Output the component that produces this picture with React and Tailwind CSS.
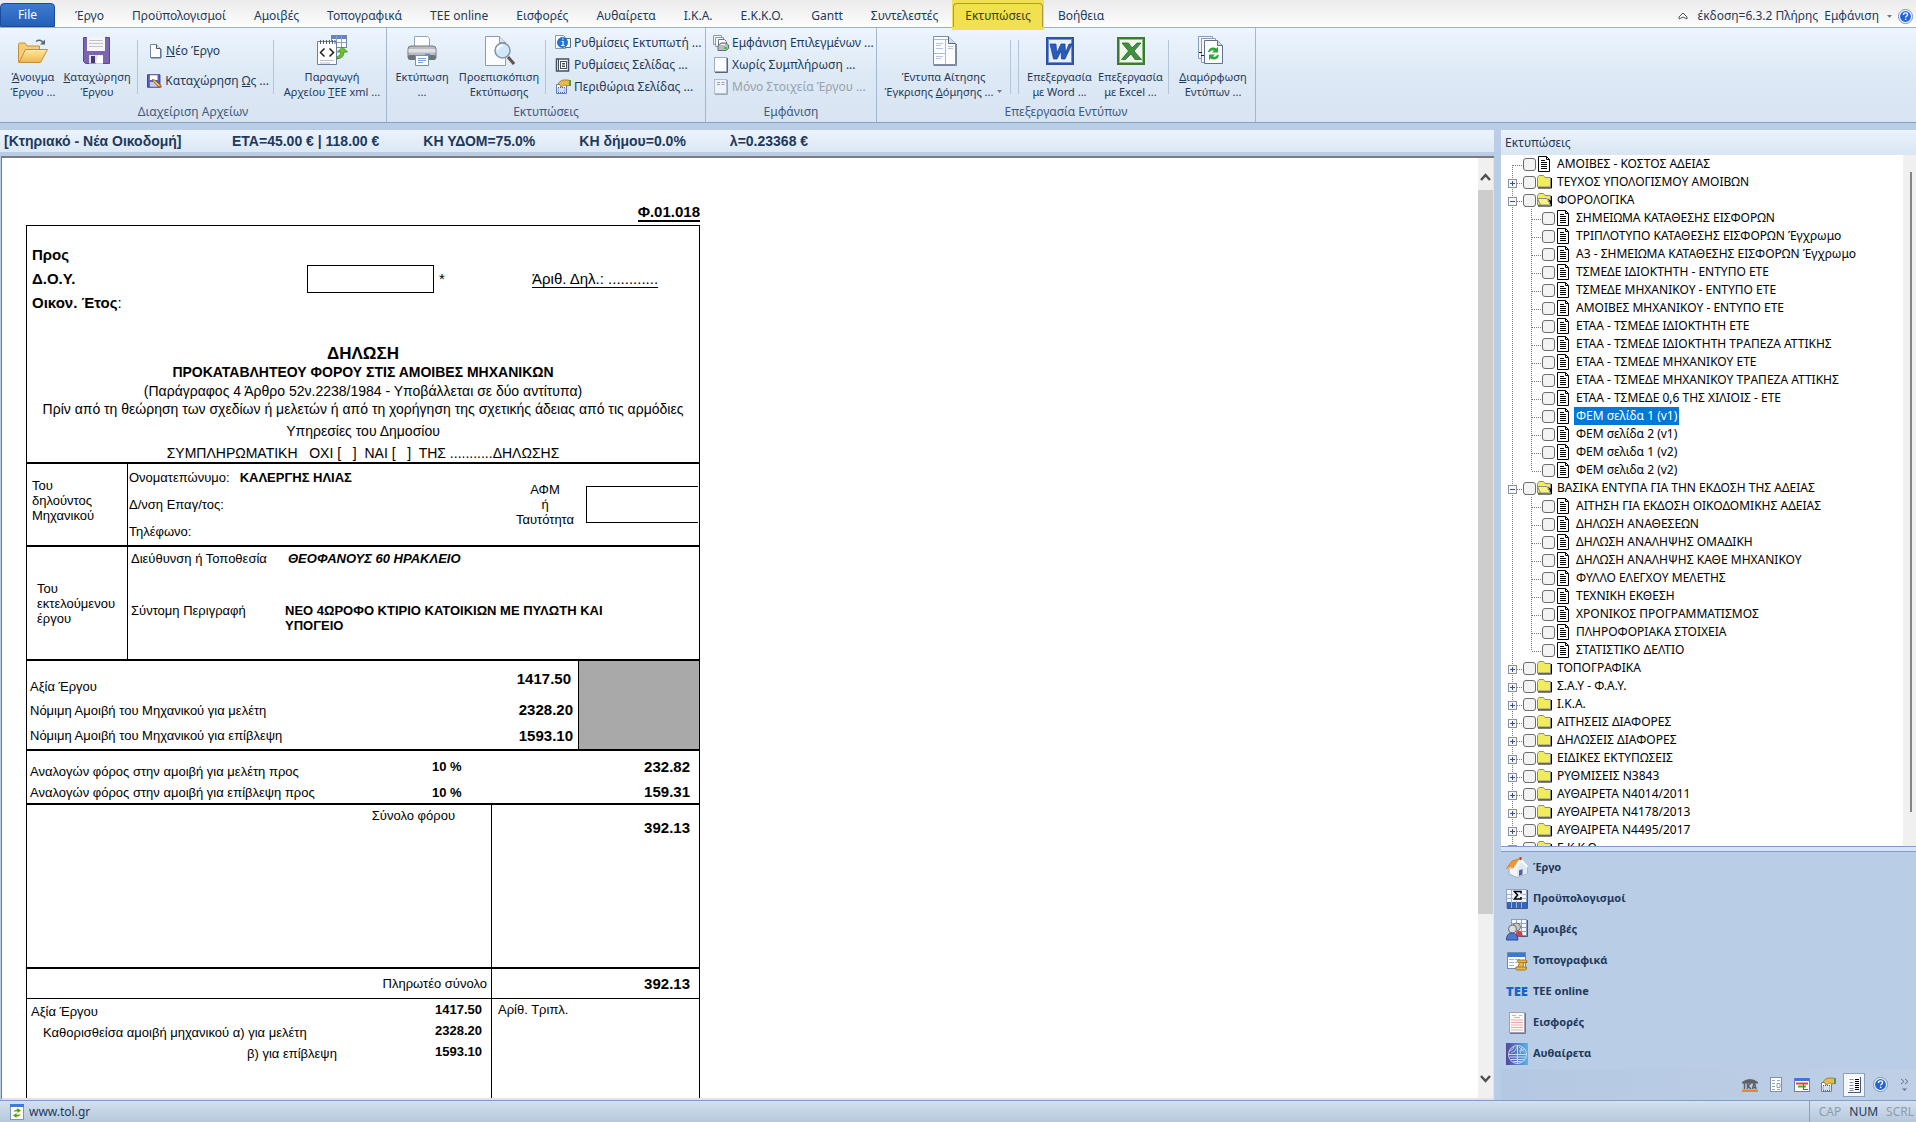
import React, { useState } from "react";

/* ---------- large ribbon icons ---------- */

const OpenIcon = () => (
  <svg width="32" height="32" viewBox="0 0 32 32">
    <defs>
      <linearGradient id="fold" x1="0" y1="0" x2="0" y2="1">
        <stop offset="0" stopColor="#ffe9a6" />
        <stop offset="1" stopColor="#f0b44e" />
      </linearGradient>
    </defs>
    <path d="M1.500 27V9.500q0-1.500 1.500-1.500h5l2 3h12.500v16z" fill="#f3cd7c" stroke="#c78f35" />
    <path d="M2 27.500 8.500 14.500h22L23.500 27.500z" fill="url(#fold)" stroke="#c78f35" />
    <path d="M19 6.500q4-3 7 1" fill="none" stroke="#55687f" strokeWidth="1.500" />
    <path d="M28 4.500v5h-5z" fill="#55687f" />
  </svg>
);

const SaveIcon = () => (
  <svg width="32" height="32" viewBox="0 0 32 32">
    <path d="M2.500 2.500h26v26h-24l-2-2z" fill="#7b64b0" stroke="#5b4791" />
    <rect x="6" y="2" width="18" height="14" fill="#f6f6f8" />
    <path d="M8 5.500h14M8 8.500h14M8 11.500h14" stroke="#c2c2ca" />
    <rect x="8" y="20" width="14" height="8.500" fill="#dfe3ee" />
    <rect x="10" y="21" width="4" height="7" fill="#463a70" />
    <path d="M17 20.500h5v8h-7z" fill="#fff" />
  </svg>
);

const XmlIcon = () => (
  <svg width="32" height="32" viewBox="0 0 32 32">
    <rect x="15.500" y=".5" width="15" height="12" fill="#fff" stroke="#6d86ad" />
    <rect x="16" y="1" width="14" height="3" fill="#5f84c8" />
    <path d="M20.500 1v11M25.500 1v11M16 7.500h14" stroke="#8da4c6" />
    <path d="M1.500 6.500h19v23h-19z" fill="#fff" stroke="#6f7f94" />
    <path d="M4.500 5v4M7.500 5v4M10.500 5v4M13.500 5v4M16.500 5v4M19 5v4" stroke="#56606d" />
    <path d="m8.500 13.500-4 4 4 4M13.500 13.500l4 4-4 4" fill="none" stroke="#1d1d1d" strokeWidth="1.500" />
    <path d="M4 25.500h14M4 28h10" stroke="#b6c0cf" />
    <path d="M21 22q4-1 4-5h-3.500l5-5 5 5H28q0 6-7 7z" fill="#6cc52e" stroke="#3b8a14" strokeWidth=".8" />
  </svg>
);

const PrinterIcon = () => (
  <svg width="32" height="32" viewBox="0 0 32 32">
    <path d="M8.500 1.500h13l2 2V13h-15z" fill="#fdfdfe" stroke="#9aa6b5" />
    <path d="M2 14q0-3 3-3h22q3 0 3 3v9H2z" fill="#b9bcc1" stroke="#74787e" />
    <path d="M2.500 14h27v3.500h-27z" fill="#dfe1e4" />
    <rect x="2" y="20" width="28" height="5" rx="2" fill="#6e7379" />
    <path d="M19 19.500h5" stroke="#4d8df0" strokeWidth="1.500" />
    <path d="M9.500 20.500h13v10h-13z" fill="#fff" stroke="#7d8da3" />
    <path d="M12 23.500h8M12 25.500h8M12 27.500h5" stroke="#7fa1d4" />
  </svg>
);

const PreviewIcon = () => (
  <svg width="32" height="32" viewBox="0 0 32 32">
    <path d="M2.500 1.500h14l6 6v23h-20z" fill="#fbfcfe" stroke="#8e9bb0" />
    <path d="M16.500 1.500v6h6" fill="#dbe3ef" stroke="#8e9bb0" />
    <path d="m25 22 6 7" stroke="#5d5450" strokeWidth="3" />
    <circle cx="19.500" cy="15.500" r="7.500" fill="#cfe8fc" stroke="#8793a3" strokeWidth="1.500" />
    <path d="M14.500 15q1-4.500 5.500-4.500" fill="none" stroke="#fff" strokeWidth="2" />
  </svg>
);

const FormsIcon = () => (
  <svg width="32" height="32" viewBox="0 0 32 32">
    <path d="M5.500 1.500h15l7 7v21h-22z" fill="#fbfcff" stroke="#7e8da6" />
    <path d="M20.500 1.500v7h7" fill="#d3dded" stroke="#54657f" />
    <path d="M6 4.500h14M17.500 5v24M6 18.500h11" stroke="#a9b9e4" />
    <path d="M8 8.500h7M8 10.500h5M8 21.500h7M8 23.500h5M20 11.500h5M20 13.500h5M8 13.500h7" stroke="#b7c4e8" />
    <path d="M28.500 9v21.500h-23" fill="none" stroke="#7a8596" />
  </svg>
);

const WordIcon = () => (
  <svg width="32" height="32" viewBox="0 0 32 32">
    <rect x="3" y="3" width="26" height="26" fill="#fff" stroke="#2d53a5" strokeWidth="2" />
    <rect x="4.500" y="4.500" width="23" height="23" fill="#e9f0fc" stroke="#6d93dc" />
    <path d="M6 9h6l.7 9L17 9h4l.5 9L25 9h3l-7 15h-3.500L17 16l-4 8H9.500z" fill="#2a5cc0" stroke="#173a86" strokeWidth=".7" />
  </svg>
);

const ExcelIcon = () => (
  <svg width="32" height="32" viewBox="0 0 32 32">
    <rect x="3" y="3" width="26" height="26" fill="#fff" stroke="#3c7a34" strokeWidth="2" />
    <rect x="4.500" y="4.500" width="23" height="23" fill="#f0f7ec" stroke="#8cbf7c" />
    <path d="M7 8h6.500l3.500 5 5-5h4l-7 8 7.500 8.500H20L16 19l-5.500 5.500H6.500L13.500 16z" fill="#3f9140" stroke="#1f5a22" strokeWidth=".7" />
  </svg>
);

const LayoutIcon = () => (
  <svg width="32" height="32" viewBox="0 0 32 32">
    <path d="M1.500 1.500h14v22h-14z" fill="#eef3fb" stroke="#8b9cbb" />
    <path d="M4.500 3.500h14v24h-14z" fill="#f5f8fd" stroke="#8b9cbb" />
    <path d="M2 17.500h3M4 20.500h3" stroke="#222" />
    <path d="M7.500 5.500h13l5 5v18h-18z" fill="#fcfdff" stroke="#60718d" />
    <path d="M20.500 5.500v5h5" fill="#cfd9ea" stroke="#60718d" />
    <path d="M11 17q1-5 6-4.500l2.500 1 1.500-2v6h-6l2-2q-3-1-4 1.500z" fill="#2fa83a" />
    <path d="M22 20q-1 5-6 4.500l-2.500-1-1.500 2v-6h6l-2 2q3 1 4-1.500z" fill="#2fa83a" />
  </svg>
);

/* ---------- 16px icons ---------- */

const NewIcon = () => (
  <svg width="16" height="16" viewBox="0 0 16 16">
    <path d="M3.500 1.500h6l4 4v9h-10z" fill="#fff" stroke="#7485a0" />
    <path d="M9.500 1.500v4h4" fill="#d9e2f0" stroke="#445672" />
    <path d="M14 6v9h-10" fill="none" stroke="#566683" />
  </svg>
);

const SaveAsIcon = () => (
  <svg width="16" height="16" viewBox="0 0 16 16">
    <path d="M.5 1.500h13v13H.5z" fill="#5a5ec2" stroke="#3d3f94" />
    <rect x="3" y="2" width="8" height="5" fill="#fff" />
    <rect x="3" y="9" width="8" height="5" fill="#c7cbea" />
    <path d="m5.500 6.500 2.500.5 7 6-2 2-6.500-6.500z" fill="#f4c545" stroke="#6d4a16" strokeWidth=".8" />
    <path d="m13.500 12.500 2 1.500-1.500 1.500-2-1.500z" fill="#d4574b" />
  </svg>
);

const PrinterSetupIcon = () => (
  <svg width="16" height="16" viewBox="0 0 16 16">
    <path d="M.5 3.500V.5h8l2 2v11H.5z" fill="#fff" stroke="#8b97aa" />
    <path d="M10 3.500h5.500v9H10" fill="#f4f7fc" stroke="#5a6b86" />
    <circle cx="7.500" cy="7.500" r="5" fill="#1b78d8" stroke="#0d4f9e" strokeWidth=".7" />
    <path d="M6.500 6.500h1.500V10M6 10.500h3.500M7 4h1.500" stroke="#fff" strokeWidth="1.200" />
  </svg>
);

const PageSetupIcon = () => (
  <svg width="16" height="16" viewBox="0 0 16 16">
    <rect x="1.500" y="2" width="12" height="12" fill="#fff" stroke="#46505f" strokeWidth="1.500" />
    <path d="M3.500 2v12" stroke="#46505f" />
    <rect x="5.500" y="4.500" width="6" height="7" fill="#fff" stroke="#46505f" />
    <path d="M7 6.500h3M7 8h3M7 9.500h3" stroke="#222" strokeWidth=".8" />
  </svg>
);

const HandIcon = () => (
  <svg width="16" height="16" viewBox="0 0 16 16">
    <path d="M1.500 5.500h10v9h-10z" fill="#fff" stroke="#6381b8" />
    <path d="M3 8.500h7v5H3z" fill="#d2dff5" stroke="#3e62a8" strokeDasharray="1 1" />
    <path d="m3 5 2.500-3L8 1h5l3 1v4l-4 1-2-1-4 2-1-2z" fill="#e6bb46" stroke="#8a6626" strokeWidth=".7" />
    <path d="M14 1h2v6h-2z" fill="#4f9c48" />
  </svg>
);

const PrintStackIcon = () => (
  <svg width="16" height="16" viewBox="0 0 16 16">
    <path d="M.5.5h8v9h-8z" fill="#f6f8fc" stroke="#8d99ad" />
    <path d="M2.500 2.500h8v9h-8z" fill="#f6f8fc" stroke="#8d99ad" />
    <path d="M5.500 4.500h6l2 2v6h-8z" fill="#fff" stroke="#6b788e" />
    <path d="M5 10.500 8 8h5l2.500 2v3.500l-2.500 2H5z" fill="#b9bcc1" stroke="#5a5f66" strokeWidth=".9" />
    <path d="M8 9.500h4" stroke="#fff" />
    <rect x="11" y="12" width="3" height="2" fill="#35cf2b" />
  </svg>
);

const BlankIcon = () => (
  <svg width="16" height="16" viewBox="0 0 16 16">
    <rect x="1.500" y=".5" width="12" height="14" fill="#fafcff" stroke="#a0abc0" />
    <path d="M14.500 1v14.500H2" fill="none" stroke="#55637e" />
  </svg>
);

const StubIcon = () => (
  <svg width="16" height="16" viewBox="0 0 16 16">
    <rect x="1.500" y=".5" width="12" height="14" fill="#eef3fa" stroke="#b3bdcd" />
    <path d="M4 3.500h3M8.500 3.500h3M4 5.500h3M8.500 5.500h3" stroke="#98a2b3" />
    <path d="M14.500 1v14.500H2" fill="none" stroke="#9aa6ba" />
  </svg>
);

const HelpIcon = ({ size = 15 }) => (
  <svg width={size} height={size} viewBox="0 0 16 16">
    <circle cx="8" cy="8" r="7.500" fill="#f3f7fd" stroke="#6e8fc9" />
    <circle cx="8" cy="8" r="5.800" fill="#2566d4" />
    <path d="M5.800 6.300q0-2.200 2.200-2.200t2.200 1.900q0 1.200-1.200 1.700-.8.400-.8 1.300" fill="none" stroke="#fff" strokeWidth="1.400" />
    <rect x="7.400" y="10.300" width="1.500" height="1.500" fill="#fff" />
  </svg>
);

/* ---------- tree icons ---------- */

const DocIcon = () => (
  <svg width="16" height="18" viewBox="0 0 16 18">
    <path d="M1.500 1.500h8l3 3v12h-11z" fill="#fff" stroke="#000" />
    <path d="M9.500 1.500v3h3" fill="none" stroke="#000" />
    <path d="M4 5.500h4M4 7.500h6M4 9.500h6M4 11.500h6M4 13.500h6" stroke="#000" />
  </svg>
);

const FolderIcon = ({ open }) => (
  <svg width="16" height="16" viewBox="0 0 16 16">
    <path d="M.5 3.500 2 1.500h4.500L8 3.500h5.500v9.500H.5z" fill="#f0ec5c" stroke="#8c8c84" />
    <path d="M1 14H14.500V4" fill="none" stroke="#000" />
    {open && <path d="M.5 6.500h9.500l3.500 6.500H3.500z" fill="#f7f47c" stroke="#8c8c84" />}
    {open && <path d="m11 6.500 3 6.500V9z" fill="#000" />}
  </svg>
);

/* ---------- navigation icons ---------- */

const HouseIcon = () => (
  <svg width="22" height="22" viewBox="0 0 22 22">
    <path d="M3 10v7l8 3.500 10-4V9l-6-6z" fill="#f2f6fb" stroke="#93a1b4" strokeWidth=".8" />
    <path d="m11 12 4-7 6 4.500v7L11 20z" fill="#dfe8f4" />
    <path d="M.5 11.500 6 4l8-2.500L8.500 11 4.500 9z" fill="#f9952f" stroke="#cf6a14" strokeWidth=".7" />
    <path d="m.5 11.500 4-2.500 4 3" fill="#fbb76a" />
    <path d="m8 12 6.500-10 7 8" fill="none" stroke="#fbfcfe" strokeWidth="1.800" />
    <path d="M13 13.500 16.500 12v5.500l-3.500 1.500z" fill="#5a5d9e" />
    <rect x="13.500" y="0" width="2" height="3" fill="#c43a1e" />
  </svg>
);

const SumIcon = () => (
  <svg width="22" height="20" viewBox="0 0 22 20">
    <rect x=".5" y=".5" width="20" height="18" fill="#f1f6fd" stroke="#90a3c5" />
    <rect x="1" y="13" width="20" height="6" fill="#3265bb" />
    <path d="M1 5.500h20M1 9.500h20M5.500 1v18M10.500 1v18M15.500 1v18" stroke="#9db4da" />
    <rect x="7" y="1" width="9" height="11" fill="#eaf1fb" />
    <path d="M15 4.500V2.500H8.500l3 3.500-3 4H15v-2" fill="none" stroke="#000" strokeWidth="1.600" />
    <path d="M21.500 1v18.500H1" fill="none" stroke="#44587f" />
  </svg>
);

const PeopleIcon = () => (
  <svg width="22" height="22" viewBox="0 0 22 22">
    <rect x="5.500" y=".5" width="15" height="16" fill="#f6f9ff" stroke="#8b9cbb" />
    <path d="M6 4.500h14M6 8.500h14M6 12.500h14M10.500 1v15M15.500 1v15" stroke="#8fa2c4" />
    <path d="M21.500 1v16.500H12" fill="none" stroke="#44587f" />
    <circle cx="10.500" cy="8" r="4" fill="#c6c6c6" stroke="#707070" />
    <path d="M9 19q0-7 4-7t3.500 5z" fill="#cf4545" />
    <circle cx="6.500" cy="10" r="4" fill="#dcdcdc" stroke="#6f6f6f" />
    <path d="M.5 21q0-7 5.500-7t6 7z" fill="#4f79d4" stroke="#2b4c96" />
  </svg>
);

const TopoIcon = () => (
  <svg width="22" height="22" viewBox="0 0 22 22">
    <rect x="1.500" y="2.500" width="18" height="16" fill="#fbfdff" stroke="#6f89b8" />
    <rect x="2" y="3" width="17" height="4" fill="#3b76dc" />
    <path d="M3 9.500h5M9 9.500h5M3 12.500h5M3 15.500h5M9 12.500h2" stroke="#9db4dc" />
    <path d="M12 10h7.500q2 0 1.500 2.500h-3l-1 4.500h3.500q.5 3-2 3H10.500q-1.500-1-.5-3h2l1.500-4.500H12q-1.500-1 0-2.500z" fill="#eab949" stroke="#9b6d1c" strokeWidth=".9" />
    <path d="M14 12.500h4M12 17h5" stroke="#9b6d1c" strokeWidth=".8" />
  </svg>
);

const TaxIcon = () => (
  <svg width="22" height="22" viewBox="0 0 22 22">
    <rect x="3.500" y=".5" width="15" height="20" fill="#fffafa" stroke="#9aa1b0" />
    <path d="M6 3.500h4M13 3.500h3M8 5.500h6M5 8h12M5 10.500h12M5 13h12M5 15.500h12M5 18h12" stroke="#f0a6a6" />
    <path d="M19.500 1v20.500H4" fill="none" stroke="#6c7890" />
  </svg>
);

const GlobeIcon = () => (
  <svg width="22" height="22" viewBox="0 0 22 22">
    <defs>
      <linearGradient id="glb" x1="0" y1="0" x2="1" y2="0">
        <stop offset="0" stopColor="#54489c" />
        <stop offset="1" stopColor="#58b4e6" />
      </linearGradient>
    </defs>
    <rect width="22" height="22" fill="url(#glb)" />
    <g fill="none" stroke="#c9d9f2">
      <circle cx="11.500" cy="11.500" r="9" />
      <path d="M2.500 11.500h18M11.500 2.500v18M4 14h15M5 16.500h13M7.500 18.500h8" />
      <path d="M4 8q3-1 4-4M5 10q5-1 6-6M13 4l5 5M13 8l6-2M14 11l2-7" strokeWidth=".8" />
    </g>
  </svg>
);

const TeeIcon = () => (
  <span className="text-[13px] leading-none font-black text-[#1268c8]">TEE</span>
);

/* ---------- bottom strip icons ---------- */

const IkaIcon = () => (
  <svg width="16" height="16" viewBox="0 0 16 16">
    <path d="M0 5q8-6 16 0v1.500H0z" fill="#5e6266" />
    <path d="M2.500 6v6M5.500 6v6M9 6l-3 3 3 3M12 6l-1.500 6M12.500 6 14 12M11 10.500h3" fill="none" stroke="#5e6266" strokeWidth="1.500" />
    <rect y="12.500" width="16" height="2.500" fill="#f0842c" />
  </svg>
);

const FormIcon = () => (
  <svg width="16" height="16" viewBox="0 0 16 16">
    <rect x="2.500" y=".5" width="11" height="14" fill="#fbfcfe" stroke="#8190a8" />
    <path d="M4 3.500h3M9 3.500h3M4 6.500h3M9 6.500h3v4H9zM4 9.500h3M4 12.500h3M9 12.500h3" fill="none" stroke="#98a4b8" />
  </svg>
);

const GanttIcon = () => (
  <svg width="16" height="16" viewBox="0 0 16 16">
    <rect x=".5" y="1.500" width="15" height="13" fill="#fff" stroke="#5b83c4" />
    <rect x="1" y="1" width="14" height="3" fill="#3b76dc" />
    <path d="M2 6.500h12" stroke="#e0452c" strokeWidth="2" />
    <path d="M4 9.500h8" stroke="#48ab3f" strokeWidth="2" />
    <path d="M9 12.500h5M9.500 6v6" stroke="#3b66b8" />
  </svg>
);

const ListIcon = () => (
  <svg width="16" height="16" viewBox="0 0 16 16">
    <rect x="2" y="0" width="12" height="15" fill="#fdfeff" />
    <path d="M3.500 2.500h4M3.500 5.500h4M3.500 8.500h4M3.500 11.500h4M3.500 13.500h4" stroke="#8290a6" />
    <path d="M9 2.500h4M9 4.500h4M9 6.500h4M9 8.500h4M9 10.500h4M9 12.500h4" stroke="#000" />
    <path d="M14.500 0v15.500H2" fill="none" stroke="#44587f" />
  </svg>
);

const SiteIcon = () => (
  <svg width="16" height="16" viewBox="0 0 16 16">
    <rect x="1.500" y=".5" width="13" height="15" fill="#fdfefa" stroke="#7f96c2" />
    <rect x="1" y="0" width="14" height="3" fill="#3f7ae0" />
    <path d="M4.500 8q1-3 4-2.500V4L12 6.500 8.500 9V7.500Q6.500 7 4.500 8zM11.500 10q-1 3-4 2.500V14L4 11.500 7.500 9v1.500q2 .5 4-.5z" fill="#5d9b12" />
  </svg>
);

/* ---------- data ---------- */

const tabs = [
  "Έργο", "Προϋπολογισμοί", "Αμοιβές", "Τοπογραφικά", "TEE online",
  "Εισφορές", "Αυθαίρετα", "Ι.Κ.Α.", "Ε.Κ.Κ.Ο.", "Gantt",
  "Συντελεστές", "Εκτυπώσεις", "Βοήθεια",
];

const tree = [
  { name: "ΑΜΟΙΒΕΣ - ΚΟΣΤΟΣ ΑΔΕΙΑΣ", doc: true },
  { name: "ΤΕΥΧΟΣ ΥΠΟΛΟΓΙΣΜΟΥ ΑΜΟΙΒΩΝ" },
  {
    name: "ΦΟΡΟΛΟΓΙΚΑ",
    children: [
      "ΣΗΜΕΙΩΜΑ ΚΑΤΑΘΕΣΗΣ ΕΙΣΦΟΡΩΝ",
      "ΤΡΙΠΛΟΤΥΠΟ ΚΑΤΑΘΕΣΗΣ ΕΙΣΦΟΡΩΝ Έγχρωμο",
      "Α3 - ΣΗΜΕΙΩΜΑ ΚΑΤΑΘΕΣΗΣ ΕΙΣΦΟΡΩΝ Έγχρωμο",
      "ΤΣΜΕΔΕ ΙΔΙΟΚΤΗΤΗ - ΕΝΤΥΠΟ ΕΤΕ",
      "ΤΣΜΕΔΕ ΜΗΧΑΝΙΚΟΥ - ΕΝΤΥΠΟ ΕΤΕ",
      "ΑΜΟΙΒΕΣ ΜΗΧΑΝΙΚΟΥ - ΕΝΤΥΠΟ ΕΤΕ",
      "ΕΤΑΑ - ΤΣΜΕΔΕ ΙΔΙΟΚΤΗΤΗ ΕΤΕ",
      "ΕΤΑΑ - ΤΣΜΕΔΕ ΙΔΙΟΚΤΗΤΗ ΤΡΑΠΕΖΑ ΑΤΤΙΚΗΣ",
      "ΕΤΑΑ - ΤΣΜΕΔΕ ΜΗΧΑΝΙΚΟΥ ΕΤΕ",
      "ΕΤΑΑ - ΤΣΜΕΔΕ ΜΗΧΑΝΙΚΟΥ ΤΡΑΠΕΖΑ ΑΤΤΙΚΗΣ",
      "ΕΤΑΑ - ΤΣΜΕΔΕ 0,6 ΤΗΣ ΧΙΛΙΟΙΣ - ΕΤΕ",
      "ΦΕΜ σελίδα 1 (v1)",
      "ΦΕΜ σελίδα 2 (v1)",
      "ΦΕΜ σελιδα 1 (v2)",
      "ΦΕΜ σελιδα 2 (v2)",
    ],
  },
  {
    name: "ΒΑΣΙΚΑ ΕΝΤΥΠΑ ΓΙΑ ΤΗΝ ΕΚΔΟΣΗ ΤΗΣ ΑΔΕΙΑΣ",
    children: [
      "ΑΙΤΗΣΗ ΓΙΑ ΕΚΔΟΣΗ ΟΙΚΟΔΟΜΙΚΗΣ ΑΔΕΙΑΣ",
      "ΔΗΛΩΣΗ ΑΝΑΘΕΣΕΩΝ",
      "ΔΗΛΩΣΗ ΑΝΑΛΗΨΗΣ ΟΜΑΔΙΚΗ",
      "ΔΗΛΩΣΗ ΑΝΑΛΗΨΗΣ ΚΑΘΕ ΜΗΧΑΝΙΚΟΥ",
      "ΦΥΛΛΟ ΕΛΕΓΧΟΥ ΜΕΛΕΤΗΣ",
      "ΤΕΧΝΙΚΗ ΕΚΘΕΣΗ",
      "ΧΡΟΝΙΚΟΣ ΠΡΟΓΡΑΜΜΑΤΙΣΜΟΣ",
      "ΠΛΗΡΟΦΟΡΙΑΚΑ ΣΤΟΙΧΕΙΑ",
      "ΣΤΑΤΙΣΤΙΚΟ ΔΕΛΤΙΟ",
    ],
  },
  { name: "ΤΟΠΟΓΡΑΦΙΚΑ" },
  { name: "Σ.Α.Υ - Φ.Α.Υ." },
  { name: "Ι.Κ.Α." },
  { name: "ΑΙΤΗΣΕΙΣ ΔΙΑΦΟΡΕΣ" },
  { name: "ΔΗΛΩΣΕΙΣ ΔΙΑΦΟΡΕΣ" },
  { name: "ΕΙΔΙΚΕΣ ΕΚΤΥΠΩΣΕΙΣ" },
  { name: "ΡΥΘΜΙΣΕΙΣ Ν3843" },
  { name: "ΑΥΘΑΙΡΕΤΑ Ν4014/2011" },
  { name: "ΑΥΘΑΙΡΕΤΑ Ν4178/2013" },
  { name: "ΑΥΘΑΙΡΕΤΑ Ν4495/2017" },
  { name: "Ε.Κ.Κ.Ο." },
];

const navItems = [
  { name: "Έργο", Icon: HouseIcon },
  { name: "Προϋπολογισμοί", Icon: SumIcon },
  { name: "Αμοιβές", Icon: PeopleIcon },
  { name: "Τοπογραφικά", Icon: TopoIcon },
  { name: "TEE online", Icon: TeeIcon },
  { name: "Εισφορές", Icon: TaxIcon },
  { name: "Αυθαίρετα", Icon: GlobeIcon },
];

/* ---------- ribbon ---------- */

const TabBar = () => {
  const [active, setActive] = useState("Εκτυπώσεις");

  return (
    <div className="relative z-10 flex h-7 items-end border-b border-[#9aaec8] bg-linear-to-b from-[#ebebeb] to-[#fdfdfd]">
      <button className="mr-[6px] h-6 w-[55px] rounded-t-sm border border-[#1c4a9c] bg-linear-to-b from-[#3d7bd0] to-[#2460b8] text-white">
        File
      </button>
      <nav className="flex h-full items-end">
        {tabs.map((tab) => (
          <button
            key={tab}
            onClick={() => setActive(tab)}
            className={
              tab === active
                ? "-mb-[3px] flex h-[30px] items-start bg-[#f1e04f] px-px pt-[3px] text-[#3a4412]"
                : "h-6 px-[14px] pt-[2px]"
            }
          >
            {tab === active ? (
              <span className="flex h-6 items-center rounded-t-sm border border-b-0 border-[#a59d3c] px-[11px] pt-px">
                {tab}
              </span>
            ) : (
              tab
            )}
          </button>
        ))}
      </nav>
      <div className="ml-auto flex h-6 items-center pt-[2px] pr-[3px]">
        <button aria-label="Ελαχιστοποίηση" className="mr-[10px]">
          <svg width="10" height="8" viewBox="0 0 10 8">
            <path d="m1 5 4-4 4 4v2L5 5 1 7z" fill="#fff" stroke="#4c5564" />
          </svg>
        </button>
        <span>έκδοση=6.3.2 Πλήρης</span>
        <button className="ml-[6px] flex items-center gap-2">
          Εμφάνιση
          <svg width="5" height="3" viewBox="0 0 5 3">
            <path d="M0 0h5L2.500 3z" fill="#6e7a8c" />
          </svg>
        </button>
        <button aria-label="Βοήθεια" className="ml-[6px]">
          <HelpIcon />
        </button>
      </div>
    </div>
  );
};

const Group = ({ title, children }) => (
  <section className="flex shrink-0 flex-col border-r border-[#a3b6d0]">
    <div className="flex flex-1 gap-1">{children}</div>
    <h2 className="h-5 text-center leading-[19px] text-[#3e5a80]">{title}</h2>
  </section>
);

const Sep = ({ className = "" }) => (
  <div className={`mt-3 mb-2 w-px shrink-0 bg-[#b4c4da] ${className}`} />
);

const BigButton = ({ icon, className, children }) => (
  <button
    className={`flex shrink-0 flex-col items-center pt-[7px] text-[11px] leading-[15px] whitespace-nowrap ${className}`}
  >
    {icon}
    <span className="mt-[2px]">{children}</span>
  </button>
);

const SmallButton = ({ icon, disabled, children }) => (
  <button
    disabled={disabled}
    className="flex items-center gap-[3px] leading-[22px] whitespace-nowrap disabled:text-[#98a1ad]"
  >
    {icon}
    <span>{children}</span>
  </button>
);

const Ribbon = () => (
  <div className="flex h-[95px] border-b border-[#8ba0bf] bg-linear-to-b from-[#edf5fe] via-[#dde9f5] to-[#d8e4f2]">
    <Group title="Διαχείριση Αρχείων">
      <BigButton icon={<OpenIcon />} className="ml-[9px] w-12">
        <u>Ά</u>νοιγμα
        <br />
        Έργου ...
      </BigButton>
      <BigButton icon={<SaveIcon />} className="w-18">
        <u>Κ</u>αταχώρηση
        <br />
        Έργου
      </BigButton>
      <Sep />
      <div className="flex w-[127px] flex-col gap-2 pt-3 pl-[5px]">
        <SmallButton icon={<NewIcon />}>
          <u>Ν</u>έο Έργο
        </SmallButton>
        <SmallButton icon={<SaveAsIcon />}>
          Καταχώρηση <u>Ω</u>ς ...
        </SmallButton>
      </div>
      <Sep />
      <BigButton icon={<XmlIcon />} className="w-[108px]">
        Παραγωγή
        <br />
        Αρχείου <u>Τ</u>ΕΕ xml ...
      </BigButton>
    </Group>

    <Group title="Εκτυπώσεις">
      <BigButton icon={<PrinterIcon />} className="ml-1 w-[62px]">
        Εκτύπωση
        <br />
        ...
      </BigButton>
      <BigButton icon={<PreviewIcon />} className="w-[84px]">
        Προεπισκόπιση
        <br />
        Εκτύπωσης
      </BigButton>
      <Sep />
      <div className="flex w-[155px] flex-col pt-1 pl-[5px]">
        <SmallButton icon={<PrinterSetupIcon />}>Ρυθμίσεις Εκτυπωτή ...</SmallButton>
        <SmallButton icon={<PageSetupIcon />}>Ρυθμίσεις Σελίδας ...</SmallButton>
        <SmallButton icon={<HandIcon />}>Περιθώρια Σελίδας ...</SmallButton>
      </div>
    </Group>

    <Group title="Εμφάνιση">
      <div className="flex w-[170px] flex-col pt-1 pl-[7px]">
        <SmallButton icon={<PrintStackIcon />}>Εμφάνιση Επιλεγμένων ...</SmallButton>
        <SmallButton icon={<BlankIcon />}>Χωρίς Συμπλήρωση ...</SmallButton>
        <SmallButton icon={<StubIcon />} disabled>
          Μόνο Στοιχεία Έργου ...
        </SmallButton>
      </div>
    </Group>

    <Group title="Επεξεργασία Εντύπων">
      <BigButton icon={<FormsIcon />} className="ml-1 w-[125px]">
        Έντυπα Αίτησης
        <br />
        Έγκρισης <u>Δ</u>όμησης ...
        <svg width="5" height="3" viewBox="0 0 5 3" className="mb-1 ml-1 inline-block">
          <path d="M0 0h5L2.500 3z" fill="#6e7a8c" />
        </svg>
      </BigButton>
      <Sep />
      <Sep className="mx-[3px]" />
      <BigButton icon={<WordIcon />} className="w-[67px]">
        Επεξεργασία
        <br />
        με Word ...
      </BigButton>
      <BigButton icon={<ExcelIcon />} className="w-[67px]">
        Επεξεργασία
        <br />
        με Excel ...
      </BigButton>
      <Sep />
      <BigButton icon={<LayoutIcon />} className="mr-[2px] w-[80px]">
        <u>Δ</u>ιαμόρφωση
        <br />
        Εντύπων ...
      </BigButton>
    </Group>
  </div>
);

/* ---------- tax declaration form ---------- */

const Declaration = () => (
  <div className="ml-6 flex h-full w-[674px] flex-col pt-[46px] font-['Liberation_Sans',Arial,sans-serif] text-[13px] text-black">
    <div className="mb-[3px] self-end border-b-2 border-black text-[15px] leading-4 font-bold">
      Φ.01.018
    </div>

    <div className="flex flex-1 flex-col border-x border-t border-black">
      <div className="h-[238px] border-b-2 border-black pt-[17px]">
        <div className="flex h-[72px] items-center pl-[5px] text-[15px]">
          <label htmlFor="doy" className="w-[275px] leading-6 font-bold">
            Προς
            <br />
            Δ.Ο.Υ.
            <br />
            Οικον. Έτος<span className="font-normal">:</span>
          </label>
          <input id="doy" className="h-7 w-[127px] border border-black" />
          <span className="ml-[5px] w-[93px]">*</span>
          <span className="border-b border-black leading-4">Άριθ. Δηλ.: ............</span>
        </div>
        <div className="mt-[30px] text-center text-[14px] leading-[18px]">
          <h1 className="text-[17px] leading-[18px] font-bold">ΔΗΛΩΣΗ</h1>
          <p className="font-bold">ΠΡΟΚΑΤΑΒΛΗΤΕΟΥ ΦΟΡΟΥ ΣΤΙΣ ΑΜΟΙΒΕΣ ΜΗΧΑΝΙΚΩΝ</p>
          <p className="mt-px">(Παράγραφος 4 Άρθρο 52ν.2238/1984 - Υποβάλλεται σε δύο αντίτυπα)</p>
          <p className="whitespace-nowrap">
            Πρίν από τη θεώρηση των σχεδίων ή μελετών ή από τη χορήγηση της σχετικής άδειας από τις αρμόδιες
          </p>
          <p className="mt-1">Υπηρεσίες του Δημοσίου</p>
          <p className="mt-1 whitespace-pre">{"ΣΥΜΠΛΗΡΩΜΑΤΙΚΗ   ΟΧΙ [   ]  ΝΑΙ [   ]  ΤΗΣ ...........ΔΗΛΩΣΗΣ"}</p>
        </div>
      </div>

      <div className="flex h-[83px] border-b-2 border-black">
        <div className="w-[101px] border-r border-black pt-[14px] pl-[5px] leading-[15px]">
          Του
          <br />
          δηλούντος
          <br />
          Μηχανικού
        </div>
        <div className="w-[387px] pl-px leading-[27px]">
          <p className="flex gap-[10px]">
            Ονοματεπώνυμο: <b>ΚΑΛΕΡΓΗΣ ΗΛΙΑΣ</b>
          </p>
          <p>Δ/νση Επαγ/τος:</p>
          <p>Τηλέφωνο:</p>
        </div>
        <label htmlFor="afm" className="w-[60px] pt-[18px] text-center leading-[15px]">
          ΑΦΜ
          <br />
          ή
          <br />
          Ταυτότητα
        </label>
        <input id="afm" className="mt-[22px] mr-px ml-[11px] h-[37px] min-w-0 flex-1 border border-r-0 border-black" />
      </div>

      <div className="flex h-[114px] border-b-2 border-black">
        <div className="w-[101px] border-r border-black pt-[34px] pl-[10px] leading-[15px]">
          Του
          <br />
          εκτελούμενου
          <br />
          έργου
        </div>
        <div className="flex-1 pl-[3px]">
          <div className="flex leading-6">
            <span className="w-[157px]">Διεύθυνση ή Τοποθεσία</span>
            <b className="italic">ΘΕΟΦΑΝΟΥΣ 60 ΗΡΑΚΛΕΙΟ</b>
          </div>
          <div className="mt-8 flex leading-[15px]">
            <span className="w-[154px]">Σύντομη Περιγραφή</span>
            <b className="w-[340px]">ΝΕΟ 4ΩΡΟΦΟ ΚΤΙΡΙΟ ΚΑΤΟΙΚΙΩΝ ΜΕ ΠΥΛΩΤΗ ΚΑΙ ΥΠΟΓΕΙΟ</b>
          </div>
        </div>
      </div>

      <div className="flex h-[90px] border-b-2 border-black">
        <table className="w-[551px]">
          <tbody>
            <tr className="h-[37px]">
              <td className="pt-[14px] pl-[3px]">Αξία Έργου</td>
              <td className="pr-[7px] text-right text-[15px] font-bold">1417.50</td>
            </tr>
            <tr className="h-[25px]">
              <td className="pl-[3px]">Νόμιμη Αμοιβή του Μηχανικού για μελέτη</td>
              <td className="pr-[5px] text-right text-[15px] font-bold">2328.20</td>
            </tr>
            <tr className="h-[26px]">
              <td className="pl-[3px]">Νόμιμη Αμοιβή του Μηχανικού για επίβλεψη</td>
              <td className="pr-[5px] text-right text-[15px] font-bold">1593.10</td>
            </tr>
          </tbody>
        </table>
        <div className="flex-1 border-l border-black bg-[#a9a9a9]" />
      </div>

      <div className="h-[54px] border-b-2 border-black pt-[3px]">
        <table className="w-full">
          <tbody>
            <tr className="h-[26px]">
              <td className="w-[405px] pt-[10px] pl-[3px] leading-4">Αναλογών φόρος στην αμοιβή για μελέτη προς</td>
              <td className="font-bold">10 %</td>
              <td className="pr-[9px] text-right text-[15px] font-bold">232.82</td>
            </tr>
            <tr className="h-[25px]">
              <td className="pl-[3px]">Αναλογών φόρος στην αμοιβή για επίβλεψη προς</td>
              <td className="font-bold">10 %</td>
              <td className="pr-[9px] text-right text-[15px] font-bold">159.31</td>
            </tr>
          </tbody>
        </table>
      </div>

      <div className="flex h-[164px] border-b-2 border-black leading-[18px]">
        <div className="w-[464px] pt-[2px] pr-9 text-right">Σύνολο φόρου</div>
        <div className="flex-1 border-l border-black pt-[14px] pr-[9px] text-right text-[15px] font-bold">
          392.13
        </div>
      </div>

      <div className="flex h-[30px] border-b border-black leading-[29px]">
        <div className="w-[464px] pr-1 text-right">Πληρωτέο σύνολο</div>
        <div className="flex-1 border-l border-black pr-[9px] text-right text-[15px] font-bold">392.13</div>
      </div>

      <div className="flex flex-1">
        <div className="w-[464px] pr-[9px]">
          <table className="w-full">
            <tbody>
              <tr className="h-[21px]">
                <td className="pt-[5px] pl-1 leading-4">Αξία Έργου</td>
                <td className="text-right leading-[18px] font-bold">1417.50</td>
              </tr>
              <tr className="h-[21px]">
                <td className="pt-[5px] pl-4 leading-4">Καθορισθείσα αμοιβή μηχανικού α) για μελέτη</td>
                <td className="text-right leading-[18px] font-bold">2328.20</td>
              </tr>
              <tr className="h-[21px]">
                <td className="pt-[5px] pl-[220px] leading-4">β) για επίβλεψη</td>
                <td className="text-right leading-[18px] font-bold">1593.10</td>
              </tr>
            </tbody>
          </table>
        </div>
        <div className="flex-1 border-l border-black pl-[6px] leading-[21px]">Αρίθ. Τριπλ.</div>
      </div>
    </div>
  </div>
);

/* ---------- print tree ---------- */

const Gutter = ({ first, sign }) => (
  <svg width="22" height="18" viewBox="0 0 22 18" className="shrink-0">
    <path d={first ? "M11.500 10v8" : "M11.500 0v18"} stroke="#7a7a7a" strokeDasharray="1 1" />
    {sign !== "line" && <path d="M12 10.500h10" stroke="#7a7a7a" strokeDasharray="1 1" />}
    {(sign === "+" || sign === "-") && (
      <>
        <rect x="7.500" y="6.500" width="8" height="8" fill="#f8f8f8" stroke="#919191" />
        <path d={sign === "+" ? "M9 10.500h5M11.500 8v5" : "M9 10.500h5"} stroke="#3350a0" />
      </>
    )}
  </svg>
);

const Branch = ({ last }) => (
  <svg width="19" height="18" viewBox="0 0 19 18" className="shrink-0">
    <path d={last ? "M8.500 0v10" : "M8.500 0v18"} stroke="#7a7a7a" strokeDasharray="1 1" />
    <path d="M9 10.500h10" stroke="#7a7a7a" strokeDasharray="1 1" />
  </svg>
);

const TreeItem = ({ name, selected, onSelect, icon }) => (
  <label className="flex h-[18px] items-center whitespace-nowrap" onClick={onSelect}>
    <input
      type="checkbox"
      className="mr-px h-[13px] w-[13px] shrink-0 appearance-none rounded-[3px] border border-[#6b6b6b] bg-[#f3f3f3] checked:bg-[#0078d7]"
    />
    {icon}
    <span className={`ml-[2px] px-[2px] leading-[18px] ${selected ? "bg-[#0078d7] text-white" : ""}`}>{name}</span>
  </label>
);

const PrintTree = () => {
  const [selected, setSelected] = useState("ΦΕΜ σελίδα 1 (v1)");
  const [closed, setClosed] = useState([]);

  const toggle = (name) =>
    setClosed(closed.includes(name) ? closed.filter((n) => n !== name) : [...closed, name]);

  return (
    <ul className="min-h-0 flex-1 overflow-hidden text-black">
      {tree.map((node, i) => {
        const open = node.children && !closed.includes(node.name);
        return (
          <li key={node.name}>
            <div className="flex">
              {node.doc ? (
                <Gutter first={i === 0} />
              ) : (
                <button aria-label={node.name} onClick={() => toggle(node.name)}>
                  <Gutter sign={open ? "-" : "+"} />
                </button>
              )}
              <TreeItem
                name={node.name}
                selected={selected === node.name}
                onSelect={() => setSelected(node.name)}
                icon={node.doc ? <DocIcon /> : <FolderIcon open={open} />}
              />
            </div>
            {open && (
              <ul>
                {node.children.map((child, j) => (
                  <li key={child} className="flex">
                    <Gutter sign="line" />
                    <Branch last={j === node.children.length - 1} />
                    <TreeItem
                      name={child}
                      selected={selected === child}
                      onSelect={() => setSelected(child)}
                      icon={<DocIcon />}
                    />
                  </li>
                ))}
              </ul>
            )}
          </li>
        );
      })}
    </ul>
  );
};

const SidePanel = () => (
  <aside className="flex w-[415px] shrink-0 flex-col">
    <h2 className="h-[25px] shrink-0 bg-linear-to-b from-[#ebf3fd] to-[#d9e5f2] pl-1 leading-[25px]">
      Εκτυπώσεις
    </h2>
    <div className="flex min-h-0 flex-1 bg-white">
      <PrintTree />
      <div className="w-[13px] bg-[#f0f0f0] pt-[17px] pb-[34px] pl-[7px]">
        <div className="h-full w-[2px] bg-[#858585]" />
      </div>
    </div>
    <div className="h-[6px] shrink-0 border-y border-[#7f9ec9] bg-[#d6e4f5]" />
    <nav className="shrink-0 text-[11px]">
      {navItems.map(({ name, Icon }) => (
        <button key={name} className="flex h-[31px] w-full items-center pl-[5px] font-bold">
          <span className="flex w-[27px] items-center">
            <Icon />
          </span>
          {name}
        </button>
      ))}
    </nav>
    <div className="flex h-[31px] shrink-0 items-center justify-end bg-linear-to-r from-[#b3c8e2] to-[#bfd0e6]">
      {[IkaIcon, FormIcon, GanttIcon, HandIcon].map((Icon, i) => (
        <button key={i} className="flex w-[26px] justify-center">
          <Icon />
        </button>
      ))}
      <button className="mx-[2px] flex h-6 w-[22px] items-center justify-center border border-[#8ba0bf] bg-[#f3f7fc]">
        <ListIcon />
      </button>
      <button className="flex w-[26px] justify-center" aria-label="Βοήθεια">
        <HelpIcon />
      </button>
      <button className="flex w-[23px] justify-center" aria-label="Περισσότερα">
        <svg width="9" height="14" viewBox="0 0 9 14">
          <path d="m1 1 3 2.500L1 6M5 1l3 2.500L5 6" fill="none" stroke="#5f7391" />
          <path d="M2 10.500h5L4.500 13z" fill="#5f7391" />
        </svg>
      </button>
    </div>
  </aside>
);

const ScrollBar = () => (
  <div className="flex w-[16px] flex-col items-center border-r border-[#e3e3e3] bg-[#f0f0f0]">
    <svg width="11" height="32" viewBox="0 0 11 32" className="shrink-0">
      <path d="m1 22 4.500-5 4.500 5" fill="none" stroke="#505050" strokeWidth="2.500" />
    </svg>
    <div className="mb-auto h-[77%] w-full bg-[#cdcdcd]" />
    <svg width="11" height="26" viewBox="0 0 11 26" className="shrink-0">
      <path d="m1 4 4.500 5L10 4" fill="none" stroke="#505050" strokeWidth="2.500" />
    </svg>
  </div>
);

export default function App() {
  return (
    <div className="flex h-screen flex-col overflow-hidden bg-[#bacde6] font-['Noto_Sans','Segoe_UI',sans-serif] text-[12px] text-[#1e395b]">
      <TabBar />
      <Ribbon />

      <div className="flex min-h-0 flex-1 gap-[7px] pt-[7px]">
        <main className="flex min-w-0 flex-1 flex-col">
          <div className="flex h-[22px] shrink-0 items-center gap-11 bg-linear-to-b from-[#ebf4fe] to-[#dce8f5] pl-1 font-['Liberation_Sans',Arial,sans-serif] text-[14px] font-bold">
            <span className="w-[184px] whitespace-nowrap">[Κτηριακό - Νέα Οικοδομή]</span>
            <span>ETA=45.00 € | 118.00 €</span>
            <span>ΚΗ ΥΔΟΜ=75.0%</span>
            <span>ΚΗ δήμου=0.0%</span>
            <span>λ=0.23368 €</span>
          </div>
          <div className="mt-1 ml-px flex min-h-0 flex-1 border-t-2 border-b-2 border-l border-t-[#7c7c7c] border-b-[#e3e3e3] border-l-[#7c7c7c] bg-white">
            <div className="min-w-0 flex-1 overflow-hidden">
              <Declaration />
            </div>
            <ScrollBar />
          </div>
        </main>
        <SidePanel />
      </div>

      <footer className="flex h-[22px] shrink-0 items-center border-t border-[#7f9ec9] bg-linear-to-b from-[#d3e0ef] to-[#b5c8dd] pl-[9px]">
        <SiteIcon />
        <a href="#site" className="ml-1">www.tol.gr</a>
        <div className="ml-auto flex h-full items-center gap-2 border-l border-[#8ba0bf] pr-[2px] pl-[9px] text-[#8f9cae]">
          <span>CAP</span>
          <span className="text-[#1e395b]">NUM</span>
          <span>SCRL</span>
        </div>
      </footer>
    </div>
  );
}
